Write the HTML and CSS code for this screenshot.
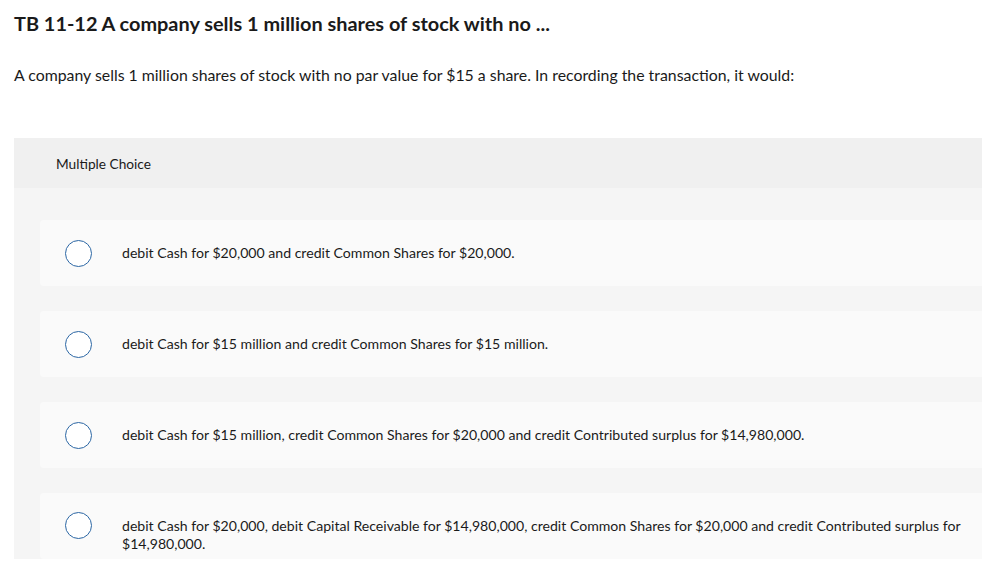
FILE: index.html
```html
<!DOCTYPE html>
<html>
<head>
<meta charset="utf-8">
<link rel="stylesheet" href="styles.css">
</head>
<body>
<div class="page">
  <h1 class="title">TB 11-12 A company sells 1 million shares of stock with no ...</h1>
  <p class="prompt">A company sells 1 million shares of stock with no par value for $15 a share. In recording the transaction, it would:</p>
  <section class="panel">
    <div class="panel-head">Multiple Choice</div>
    <div class="choices">
      <div class="choice"><span class="radio"></span><span class="label">debit Cash for $20,000 and credit Common Shares for $20,000.</span></div>
      <div class="choice"><span class="radio"></span><span class="label">debit Cash for $15 million and credit Common Shares for $15 million.</span></div>
      <div class="choice"><span class="radio"></span><span class="label">debit Cash for $15 million, credit Common Shares for $20,000 and credit Contributed surplus for $14,980,000.</span></div>
      <div class="choice"><span class="radio"></span><span class="label">debit Cash for $20,000, debit Capital Receivable for $14,980,000, credit Common Shares for $20,000 and credit Contributed surplus for $14,980,000.</span></div>
    </div>
  </section>
</div>
</body>
</html>
```
FILE: styles.css
```css
html, body { margin: 0; padding: 0; background: #fff; }
body { font-family: Lato, "Noto Sans", sans-serif; color: #1a1a1a; }
.page { padding: 0 0 0 14px; }
.title { margin: 0; padding-top: 10px; font-size: 19.9px; line-height: 26px; font-weight: 700; color: #1a1a1a; }
.prompt { margin: 0; padding-top: 28px; font-size: 15.85px; line-height: 22px; color: #1a1a1a; }
.panel { margin-top: 52px; background: #f5f5f5; }
.panel-head { background: #f0f0f0; height: 50px; display: flex; align-items: center; padding-left: 42px; font-size: 13.7px; color: #1a1a1a; }
.choices { display: flex; flex-direction: column; gap: 25px; padding: 32px 0 0 26px; }
.choice { background: #fafafa; border-radius: 4px 0 0 4px; min-height: 66px; display: flex; align-items: center; box-sizing: border-box; }
.radio { flex: none; width: 25px; height: 25px; border: 1.5px solid #2b66a4; border-radius: 50%; margin-left: 25px; margin-right: 30px; background: #fff; }
.label { font-size: 14.1px; line-height: 18px; padding-right: 20px; }
.choice:last-child { align-items: flex-start; padding-top: 24px; }
.choice:last-child .radio { margin-top: -5px; }
```
